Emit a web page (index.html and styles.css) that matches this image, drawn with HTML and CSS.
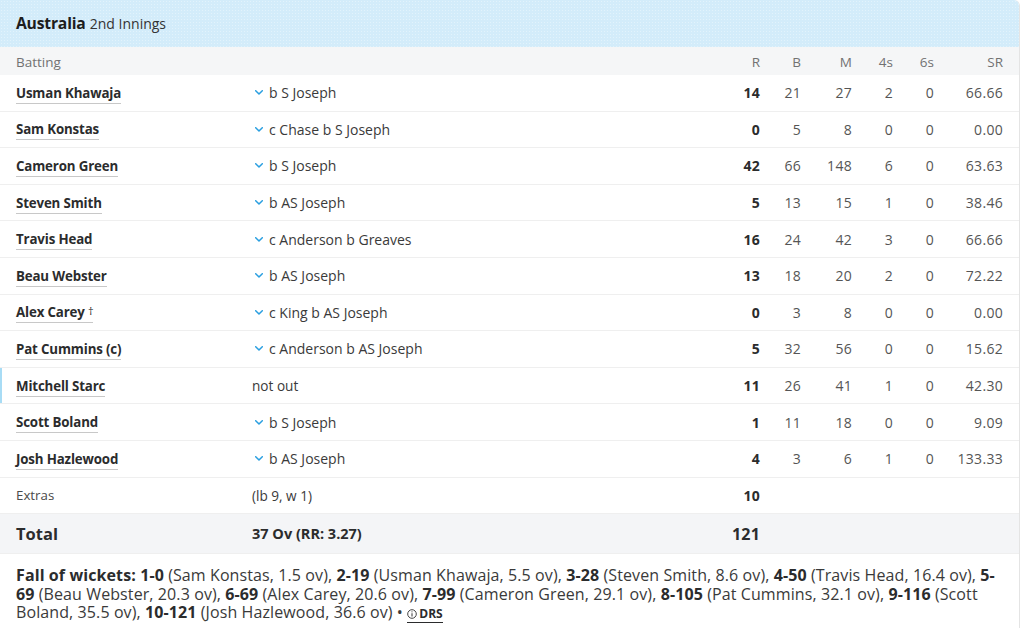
FILE: index.html
```html
<!DOCTYPE html>
<html>
<head>
<meta charset="utf-8">
<link rel="stylesheet" href="styles.css">
</head>
<body>
<div class="card">
  <div class="head"><span class="team">Australia</span> <span class="inn">2nd Innings</span></div>
  <div class="row cols">
    <div class="c-name">Batting</div><div></div>
    <div class="num">R</div><div class="num">B</div><div class="num">M</div><div class="num">4s</div><div class="num">6s</div><div class="num">SR</div>
  </div>
  <div class="row"><div class="c-name"><a class="pl">Usman Khawaja </a></div><div class="dis"><svg class="chev" viewBox="0 0 8 5"><polyline points="0.7,0.7 4,4 7.3,0.7"/></svg>b S Joseph</div><div class="num r">14</div><div class="num">21</div><div class="num">27</div><div class="num">2</div><div class="num">0</div><div class="num">66.66</div></div>
  <div class="row"><div class="c-name"><a class="pl">Sam Konstas </a></div><div class="dis"><svg class="chev" viewBox="0 0 8 5"><polyline points="0.7,0.7 4,4 7.3,0.7"/></svg>c Chase b S Joseph</div><div class="num r">0</div><div class="num">5</div><div class="num">8</div><div class="num">0</div><div class="num">0</div><div class="num">0.00</div></div>
  <div class="row"><div class="c-name"><a class="pl">Cameron Green </a></div><div class="dis"><svg class="chev" viewBox="0 0 8 5"><polyline points="0.7,0.7 4,4 7.3,0.7"/></svg>b S Joseph</div><div class="num r">42</div><div class="num">66</div><div class="num">148</div><div class="num">6</div><div class="num">0</div><div class="num">63.63</div></div>
  <div class="row"><div class="c-name"><a class="pl">Steven Smith </a></div><div class="dis"><svg class="chev" viewBox="0 0 8 5"><polyline points="0.7,0.7 4,4 7.3,0.7"/></svg>b AS Joseph</div><div class="num r">5</div><div class="num">13</div><div class="num">15</div><div class="num">1</div><div class="num">0</div><div class="num">38.46</div></div>
  <div class="row"><div class="c-name"><a class="pl">Travis Head </a></div><div class="dis"><svg class="chev" viewBox="0 0 8 5"><polyline points="0.7,0.7 4,4 7.3,0.7"/></svg>c Anderson b Greaves</div><div class="num r">16</div><div class="num">24</div><div class="num">42</div><div class="num">3</div><div class="num">0</div><div class="num">66.66</div></div>
  <div class="row"><div class="c-name"><a class="pl">Beau Webster </a></div><div class="dis"><svg class="chev" viewBox="0 0 8 5"><polyline points="0.7,0.7 4,4 7.3,0.7"/></svg>b AS Joseph</div><div class="num r">13</div><div class="num">18</div><div class="num">20</div><div class="num">2</div><div class="num">0</div><div class="num">72.22</div></div>
  <div class="row"><div class="c-name"><a class="pl">Alex Carey <span class="dag">†</span></a></div><div class="dis"><svg class="chev" viewBox="0 0 8 5"><polyline points="0.7,0.7 4,4 7.3,0.7"/></svg>c King b AS Joseph</div><div class="num r">0</div><div class="num">3</div><div class="num">8</div><div class="num">0</div><div class="num">0</div><div class="num">0.00</div></div>
  <div class="row"><div class="c-name"><a class="pl">Pat Cummins (c)</a></div><div class="dis"><svg class="chev" viewBox="0 0 8 5"><polyline points="0.7,0.7 4,4 7.3,0.7"/></svg>c Anderson b AS Joseph</div><div class="num r">5</div><div class="num">32</div><div class="num">56</div><div class="num">0</div><div class="num">0</div><div class="num">15.62</div></div>
  <div class="row notout"><div class="c-name"><a class="pl">Mitchell Starc </a></div><div class="dis plain">not out</div><div class="num r">11</div><div class="num">26</div><div class="num">41</div><div class="num">1</div><div class="num">0</div><div class="num">42.30</div></div>
  <div class="row"><div class="c-name"><a class="pl">Scott Boland </a></div><div class="dis"><svg class="chev" viewBox="0 0 8 5"><polyline points="0.7,0.7 4,4 7.3,0.7"/></svg>b S Joseph</div><div class="num r">1</div><div class="num">11</div><div class="num">18</div><div class="num">0</div><div class="num">0</div><div class="num">9.09</div></div>
  <div class="row"><div class="c-name"><a class="pl">Josh Hazlewood </a></div><div class="dis"><svg class="chev" viewBox="0 0 8 5"><polyline points="0.7,0.7 4,4 7.3,0.7"/></svg>b AS Joseph</div><div class="num r">4</div><div class="num">3</div><div class="num">6</div><div class="num">1</div><div class="num">0</div><div class="num">133.33</div></div>
  <div class="row extras"><div class="c-name">Extras</div><div class="dis plain">(lb 9, w 1)</div><div class="num r">10</div></div>
  <div class="row total"><div class="c-name">Total</div><div class="dis plain ov">37 Ov (RR: 3.27)</div><div class="num r">121</div></div>
  <div class="fow"><b>Fall of wickets:</b> <b>1-0</b> (Sam Konstas, 1.5 ov), <b>2-19</b> (Usman Khawaja, 5.5 ov), <b>3-28</b> (Steven Smith, 8.6 ov), <b>4-50</b> (Travis Head, 16.4 ov), <b>5-<wbr>69</b> (Beau Webster, 20.3 ov), <b>6-69</b> (Alex Carey, 20.6 ov), <b>7-99</b> (Cameron Green, 29.1 ov), <b>8-105</b> (Pat Cummins, 32.1 ov), <b>9-116</b> (Scott Boland, 35.5 ov), <b>10-121</b> (Josh Hazlewood, 36.6 ov) &bull; <a class="drs"><svg class="info" viewBox="0 0 10 10"><circle cx="5" cy="5" r="4.3"/><line x1="5" y1="4.2" x2="5" y2="7.4"/><circle class="dot" cx="5" cy="2.8" r="0.6"/></svg>DRS</a></div>
</div>
</body>
</html>
```
FILE: styles.css
```css
* { box-sizing: border-box; }
html, body { margin: 0; padding: 0; background: #fff; }
body {
  font-family: "Open Sans", "Noto Sans", sans-serif;
  color: #2b2c2d;
  width: 1024px;
  height: 628px;
  overflow: hidden;
}
.card {
  width: 1020px;
  border-right: 1px solid #e4e4e4;
  border-bottom: 1px solid #ececec;
  border-top-right-radius: 6px;
  overflow: hidden;
}
.head {
  height: 47px;
  background-color: #d3ecfa;
  background-image: radial-gradient(rgba(255,255,255,0.35) 0.6px, transparent 0.8px);
  background-size: 3px 3px;
  padding: 12px 16px 0;
}
.team { font-weight: 700; font-size: 15.7px; color: #1d1d1d; letter-spacing: -0.2px; }
.inn { font-size: 14px; color: #333; }
.row {
  display: grid;
  grid-template-columns: 236px 1fr 61px 41px 51px 41px 41px 69px;
  align-items: center;
  height: 36.6px;
  padding: 0 16px;
  font-size: 13px;
  border-bottom: 1px solid #efefef;
}
.cols {
  height: 28px;
  background: #f5f6f7;
  color: #727272;
  border-bottom: none;
  font-size: 13.5px;
  padding-top: 2px;
}
.c-name { white-space: nowrap; }
.pl {
  font-weight: 700;
  font-size: 13.3px;
  color: #2b2c2d;
  border-bottom: 1px solid #c8c8c8;
  padding-bottom: 1px;
  letter-spacing: -0.15px;
}
.dag { font-weight: 400; font-size: 11px; position: relative; top: -2px; }
.dis { display: flex; align-items: center; color: #3a3a3a; white-space: nowrap; font-size: 14px; }
.dis.plain { font-size: 13.6px; }
.chev { width: 8px; height: 5px; margin: 0 6px 0 3px; position: relative; top: 0; }
.chev polyline { fill: none; stroke: #2a9fe0; stroke-width: 1.5; stroke-linecap: round; stroke-linejoin: round; }
.num { text-align: right; color: #555; font-size: 14px; letter-spacing: 0.3px; }
.cols .num { color: #727272; font-size: 13.5px; letter-spacing: 0; }
.num.r { font-weight: 700; color: #2b2c2d; letter-spacing: 0.2px; }
.notout { box-shadow: inset 2px 0 0 #a8dcf5; }
.extras .c-name { color: #4a4a4a; font-size: 13.3px; }
.total {
  height: 40px;
  background: #f4f5f7;
  border-bottom: 1px solid #efefef;
}
.total .c-name { font-weight: 700; font-size: 16.5px; color: #2b2c2d; }
.total .ov { font-weight: 700; font-size: 14.5px; color: #2b2c2d; }
.total .num.r { font-size: 16px; }
.fow {
  padding: 12px 20px 12px 16px;
  font-size: 16px;
  line-height: 18.5px;
  letter-spacing: 0.1px;
  color: #3a3a3a;
}
.fow b { color: #2b2c2d; }
.drs {
  font-weight: 700;
  font-size: 12px;
  letter-spacing: 0;
  color: #2b2c2d;
  border-bottom: 1px solid #2b2c2d;
}
.info { width: 10px; height: 10px; margin-right: 2px; position: relative; top: 1px; }
.info circle { fill: none; stroke: #444; stroke-width: 1; }
.info line { stroke: #444; stroke-width: 1.1; }
.info .dot { fill: #444; stroke: none; }
```
